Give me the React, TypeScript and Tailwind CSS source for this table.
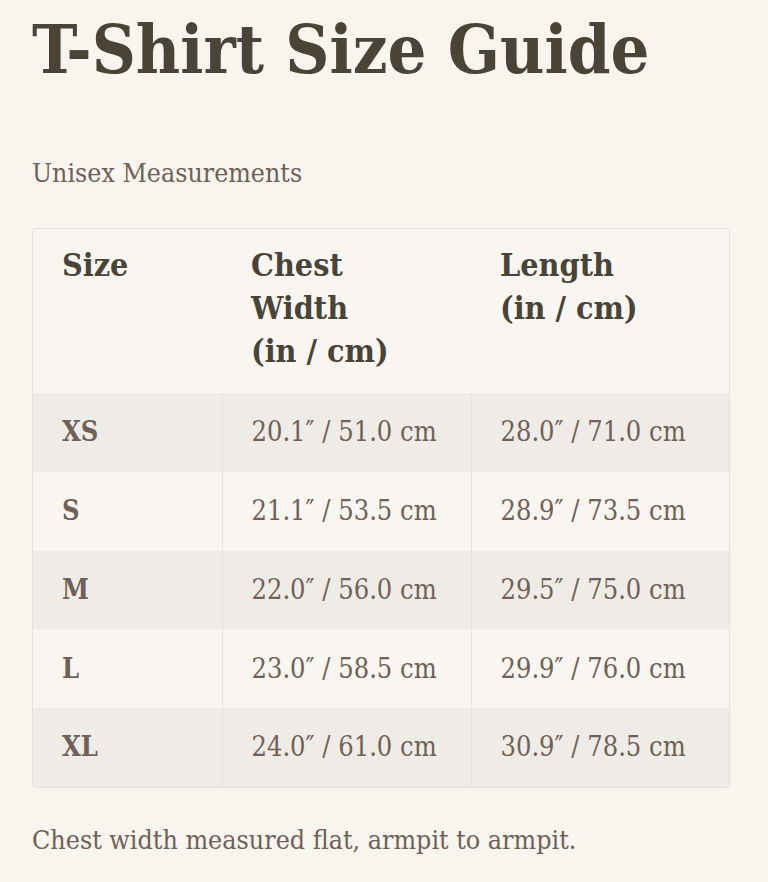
const rows = [
  { size: "XS", chest: "20.1″ / 51.0 cm", length: "28.0″ / 71.0 cm" },
  { size: "S", chest: "21.1″ / 53.5 cm", length: "28.9″ / 73.5 cm" },
  { size: "M", chest: "22.0″ / 56.0 cm", length: "29.5″ / 75.0 cm" },
  { size: "L", chest: "23.0″ / 58.5 cm", length: "29.9″ / 76.0 cm" },
  { size: "XL", chest: "24.0″ / 61.0 cm", length: "30.9″ / 78.5 cm" },
];

export default function App() {
  return (
    <div className="min-h-screen bg-[#f8f5ef] px-8 pt-[9px] font-['DejaVu_Serif_Condensed','Liberation_Serif',serif]">
      <h1 className="text-[68px] font-bold leading-[80px] text-[#4a4438]">T-Shirt Size Guide</h1>
      <p className="mt-[66px] text-[26.5px] leading-[36px] text-[#6f6157]">Unisex Measurements</p>
      <div className="mt-[37px] w-[698px] overflow-hidden rounded border border-[#e6e1d9]">
        <table className="w-full border-collapse text-left">
          <thead>
            <tr className="bg-[#f9f6f1] text-[32px] font-bold leading-[43px] text-[#4a4438]">
              <th className="w-[189px] pt-[15px] pb-[20px] pl-[29px] pr-4 align-top">Size</th>
              <th className="w-[249px] pt-[15px] pb-[20px] pl-[29px] pr-4 align-top">
                Chest
                <br />
                Width
                <br />
                (in / cm)
              </th>
              <th className="pt-[15px] pb-[20px] pl-[29px] pr-4 align-top">
                Length
                <br />
                (in / cm)
              </th>
            </tr>
          </thead>
          <tbody>
            {rows.map((r, i) => (
              <tr key={r.size} className={i % 2 === 0 ? "bg-[#efece7]" : "bg-[#f9f6f1]"}>
                <td className="h-[78.8px] border-r border-[#e8e4dd] pl-[29px] text-[27px] font-bold text-[#6f6157]">{r.size}</td>
                <td className="h-[78.8px] border-r border-[#e8e4dd] pl-[29px] text-[27px] text-[#6f6157]">{r.chest}</td>
                <td className="h-[78.8px] pl-[29px] text-[27px] text-[#6f6157]">{r.length}</td>
              </tr>
            ))}
          </tbody>
        </table>
      </div>
      <p className="mt-[34px] text-[26.6px] leading-[36px] text-[#6f6157]">Chest width measured flat, armpit to armpit.</p>
    </div>
  );
}
